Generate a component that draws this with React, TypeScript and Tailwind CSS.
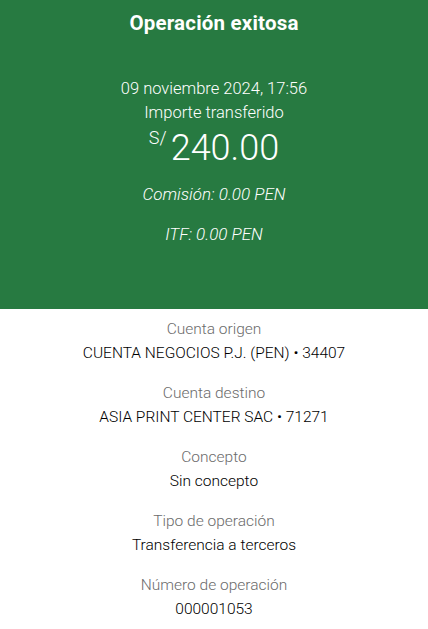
export default function App() {
  const rows = [
    { label: "Cuenta origen", value: "CUENTA NEGOCIOS P.J. (PEN) • 34407" },
    { label: "Cuenta destino", value: "ASIA PRINT CENTER SAC • 71271" },
    { label: "Concepto", value: "Sin concepto" },
    { label: "Tipo de operación", value: "Transferencia a terceros" },
    { label: "Número de operación", value: "000001053" },
  ];

  return (
    <div className="w-[428px] h-[629px] overflow-hidden bg-white font-['Roboto',sans-serif]">
      <div className="h-[309px] bg-[#277a41] text-white flex flex-col items-center">
        <h1 className="mt-[9px] text-[20.5px] leading-[28px] font-bold tracking-[0.2px]">
          Operación exitosa
        </h1>
        <p className="mt-[40px] text-[16.5px] leading-[24px] font-light">
          09 noviembre 2024, 17:56
        </p>
        <p className="text-[16.5px] leading-[24px] font-light">Importe transferido</p>
        <div className="flex items-start mt-[2px]">
          <span className="text-[18px] leading-[20px] font-light mr-[4px] mt-[1px]">S/</span>
          <span className="text-[36px] leading-[42px] font-light">240.00</span>
        </div>
        <p className="mt-[13px] text-[17px] leading-[24px] font-light italic">
          Comisión: 0.00 PEN
        </p>
        <p className="mt-[16px] text-[17px] leading-[24px] font-light italic">
          ITF: 0.00 PEN
        </p>
      </div>
      <div className="flex flex-col items-center pt-[8px]">
        {rows.map((r) => (
          <div key={r.label} className="flex flex-col items-center h-[64px]">
            <p className="text-[15.5px] leading-[24px] font-light text-[#6b6b6b]">{r.label}</p>
            <p className="text-[15.5px] leading-[24px] font-light text-[#000]">{r.value}</p>
          </div>
        ))}
      </div>
    </div>
  );
}
